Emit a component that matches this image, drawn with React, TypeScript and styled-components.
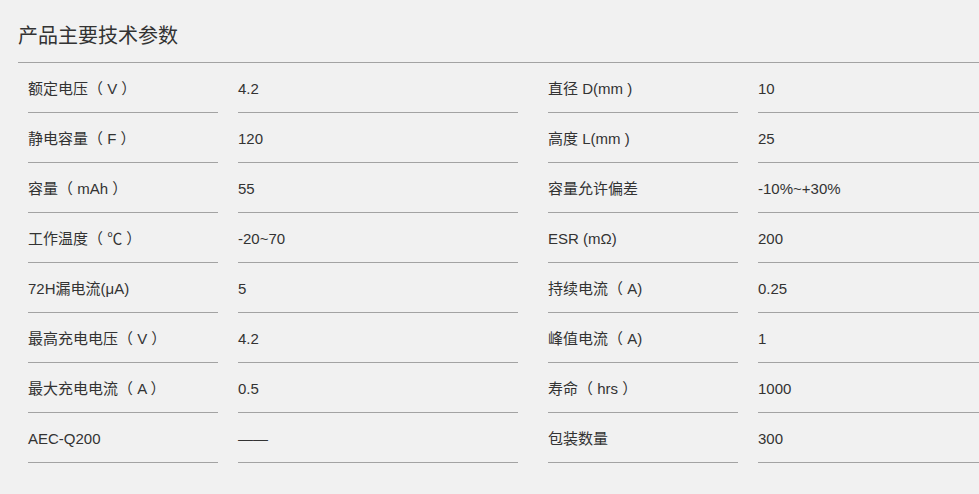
import React, {FC} from 'react'
import styled, {createGlobalStyle} from "styled-components";

const GlobalStyle = createGlobalStyle`
  html, body {
    margin: 0;
    padding: 0;
    background: #f1f1f1;
    overflow: hidden;
  }
  body {
    font-family: "Liberation Sans", "Noto Sans CJK SC", Arial, sans-serif;
    color: #333;
    text-spacing-trim: space-all;
  }
`;

type Param = {
    label: string
    value: string
}

const params: Param[] = [
    {label: '额定电压（ V ）', value: '4.2'},
    {label: '直径 D(mm )', value: '10'},
    {label: '静电容量（ F ）', value: '120'},
    {label: '高度 L(mm )', value: '25'},
    {label: '容量（ mAh ）', value: '55'},
    {label: '容量允许偏差', value: '-10%~+30%'},
    {label: '工作温度（ ℃ ）', value: '-20~70'},
    {label: 'ESR (mΩ)', value: '200'},
    {label: '72H漏电流(μA)', value: '5'},
    {label: '持续电流（ A)', value: '0.25'},
    {label: '最高充电电压（ V ）', value: '4.2'},
    {label: '峰值电流（ A)', value: '1'},
    {label: '最大充电电流（ A ）', value: '0.5'},
    {label: '寿命（ hrs ）', value: '1000'},
    {label: 'AEC-Q200', value: '——'},
    {label: '包装数量', value: '300'},
]

const Root = styled.section`
  width: 1040px;
  padding-left: 18px;
`;

const Title = styled.h2`
  margin: 0;
  padding: 24px 0 14px 0;
  font-size: 20px;
  line-height: 24px;
  font-weight: 400;
  color: #333;
  border-bottom: 1px solid #a3a3a3;
`;

const List = styled.ul`
  margin: 0;
  padding: 0 0 0 10px;
  list-style: none;
  display: grid;
  grid-template-columns: 490px 490px;
  column-gap: 30px;
`;

const Item = styled.li`
  display: flex;
  gap: 20px;
`;

const Cell = styled.div<{ $wide?: boolean }>`
  box-sizing: border-box;
  width: ${({$wide}) => $wide ? '280px' : '190px'};
  height: 50px;
  padding-top: 16px;
  font-size: 15px;
  line-height: 20px;
  color: #333;
  border-bottom: 1px solid #a3a3a3;
  white-space: nowrap;
`;

const App: FC = () => {
    return (
        <Root>
            <GlobalStyle/>
            <Title>产品主要技术参数</Title>
            <List>
                {params.map((item: Param, index: number) => {
                    return (
                        <Item key={index}>
                            <Cell>{item.label}</Cell>
                            <Cell $wide>{item.value}</Cell>
                        </Item>
                    )
                })}
            </List>
        </Root>
    )
}
export default App;
